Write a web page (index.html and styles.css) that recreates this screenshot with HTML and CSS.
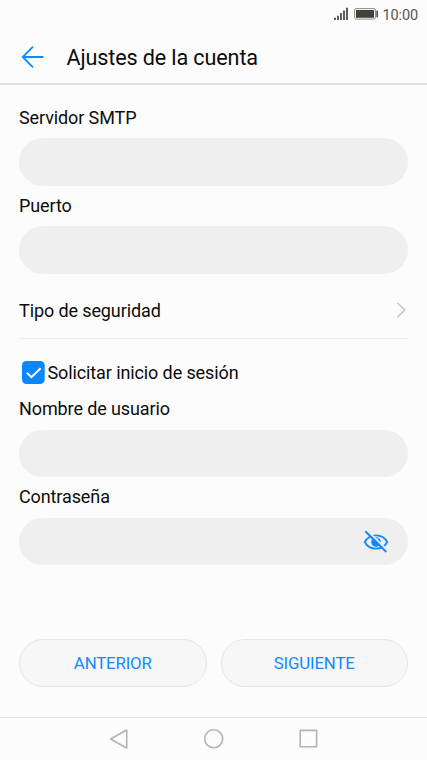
FILE: index.html
```html
<!DOCTYPE html>
<html lang="es">
<head>
<meta charset="utf-8">
<title>Ajustes de la cuenta</title>
<link rel="stylesheet" href="styles.css">
</head>
<body>
<div class="status">
  <svg class="signal" width="15" height="14" viewBox="0 0 15 14"><path d="M1 10.700v2.300M4 8.700v4.300M7 6v7M10 3.500v9.500M13 .7v12.300" stroke="#555650" stroke-width="1.900"/></svg>
  <svg class="battery" width="25" height="12" viewBox="0 0 25 12"><rect x=".6" y=".6" width="20.800" height="10.500" rx="1.500" fill="none" stroke="#8a8b87"/><rect x="2" y="2" width="18" height="7.800" fill="#41423c"/><rect x="22.300" y="2.500" width="1.700" height="6.800" rx=".6" fill="#555650"/></svg>
  <span>10:00</span>
</div>
<header class="header">
  <svg width="24" height="24" viewBox="0 0 24 24"><path d="M12 1.700 1.700 12 12 22.300M1.700 12H22.500" fill="none" stroke="#118aff" stroke-width="1.800"/></svg>
  <h1>Ajustes de la cuenta</h1>
</header>
<main class="form">
  <label class="label" for="smtp">Servidor SMTP</label>
  <div class="field"><input id="smtp" type="text"></div>
  <label class="label" for="port">Puerto</label>
  <div class="field"><input id="port" type="text"></div>
  <div class="security">
    <span>Tipo de seguridad</span>
    <svg width="11" height="18" viewBox="0 0 11 18"><path d="M1.500 2 8.700 9 1.500 16" fill="none" stroke="#c6c6c6" stroke-width="1.700"/></svg>
  </div>
  <div class="check">
    <svg width="23" height="23" viewBox="0 0 23 23"><rect width="22.700" height="23" rx="4.500" fill="#0b86ff"/><path d="m4.900 11.700 4.600 4.500 9.100-8.900" fill="none" stroke="#fff" stroke-width="2"/></svg>
    <span>Solicitar inicio de sesión</span>
  </div>
  <label class="label" for="user">Nombre de usuario</label>
  <div class="field"><input id="user" type="text"></div>
  <label class="label" for="pass">Contraseña</label>
  <div class="field">
    <input id="pass" type="password">
    <svg class="eye" width="26" height="24" viewBox="0 0 26 24"><path d="M1.800 12C4 7.800 8 5.300 13 5.300S22 7.800 24.200 12C22 16.200 18 18.700 13 18.700S4 16.200 1.800 12Z" fill="none" stroke="#118aff" stroke-width="1.800"/><circle cx="13" cy="12" r="4.800" fill="#118aff"/><path d="M14 10.500q.3-1.500 1.400-2" fill="none" stroke="#efefef" stroke-width="1.100"/><path d="m3.600 .1 21 20.300" stroke="#efefef" stroke-width="2"/><path d="m2.300 1.300 21 20.700" stroke="#118aff" stroke-width="1.900"/></svg>
  </div>
</main>
<div class="actions"><button>ANTERIOR</button><button>SIGUIENTE</button></div>
<nav class="nav">
  <svg width="22" height="22" viewBox="0 0 22 22"><path d="M18.700 2v18L2.500 11Z"/></svg>
  <svg width="22" height="22" viewBox="0 0 22 22"><circle cx="10.700" cy="10.700" r="9"/></svg>
  <svg width="22" height="22" viewBox="0 0 22 22"><rect x="2.200" y="2.400" width="16.400" height="16.400" rx=".4"/></svg>
</nav>
</body>
</html>
```
FILE: styles.css
```css
* { box-sizing: border-box; }
body {
  margin: 0;
  width: 427px;
  height: 760px;
  display: flex;
  flex-direction: column;
  overflow: hidden;
  background: #fcfcfc;
  color: #0c0c0c;
  font-family: Roboto, sans-serif;
  font-size: 18px;
  letter-spacing: -0.11px;
}
svg { display: block; flex: none; }
.status {
  height: 30px;
  display: flex;
  align-items: center;
  justify-content: flex-end;
  padding-right: 9px;
  color: #555650;
  font-size: 14.5px;
  line-height: 30px;
}
.status span { padding-top: 1px; }
.signal { margin: 0 5px 2px 0; }
.battery { margin: 0 3px 2px 0; }
.header {
  height: 55px;
  display: flex;
  align-items: center;
  gap: 21.5px;
  padding: 0 0 0 21px;
  border-bottom: 2px solid #e0e0e0;
}
h1 { margin: 3px 0 0; font-size: 21.6px; font-weight: 400; line-height: 30px; letter-spacing: -0.13px; }
.form { padding: 12.5px 19px 0; }
.label { display: block; height: 40.5px; line-height: 40.5px; }
.field {
  height: 47.5px;
  display: flex;
  align-items: center;
  padding: 0 19px;
  border-radius: 24px;
  background: #efefef;
}
.field input {
  flex: 1;
  min-width: 0;
  height: 100%;
  padding: 0;
  border: 0;
  outline: 0;
  background: transparent;
  font: inherit;
}
.eye { margin-top: 1px; }
.security {
  height: 65.5px;
  display: flex;
  align-items: center;
  justify-content: space-between;
  padding: 8px 1px 0 0;
  border-bottom: 1px solid #ededed;
}
.security span { padding-top: 2px; }
.check { height: 50px; display: flex; align-items: center; gap: 2.5px; padding: 17px 0 0 3px; }
.actions { display: grid; grid-template-columns: 1fr 1fr; gap: 14px; margin-top: auto; padding: 0 19px 30px; }
.actions button {
  height: 48px;
  padding: 0;
  border: 1px solid #e6e6e6;
  border-radius: 24px;
  background: #f7f7f7;
  color: #118aff;
  font: 16.8px Roboto, sans-serif;
  letter-spacing: -0.15px;
}
.nav {
  height: 43px;
  display: flex;
  justify-content: center;
  gap: 73px;
  padding-top: 10px;
  border-top: 1px solid #e5e5e5;
}
.nav svg { fill: none; stroke: #b4b4b4; stroke-width: 1.6; stroke-linejoin: round; }
```
